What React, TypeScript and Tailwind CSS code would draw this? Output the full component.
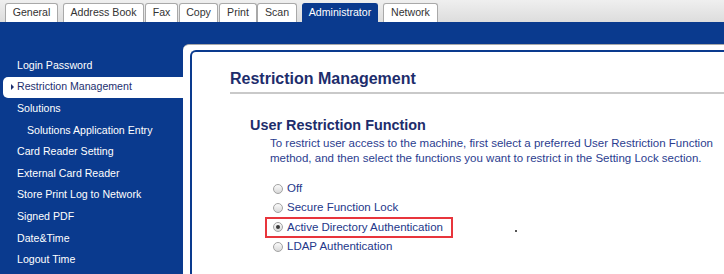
import React from 'react'

const tabs = [
  { label: 'General', w: 'w-[53px]', ml: 'ml-[5px]' },
  { label: 'Address Book', w: 'w-[81px]', ml: 'ml-[5px]' },
  { label: 'Fax', w: 'w-[33px]', ml: 'ml-[1px]' },
  { label: 'Copy', w: 'w-[39px]', ml: 'ml-[1px]' },
  { label: 'Print', w: 'w-[38px]', ml: 'ml-[1px]' },
  { label: 'Scan', w: 'w-[40px]', ml: 'ml-0' },
  { label: 'Administrator', w: 'w-[76px]', ml: 'ml-[5px]', active: true },
  { label: 'Network', w: 'w-[55px]', ml: 'ml-[5px]' },
]

const menu = [
  { label: 'Login Password' },
  { label: 'Restriction Management', selected: true },
  { label: 'Solutions' },
  { label: 'Solutions Application Entry', sub: true },
  { label: 'Card Reader Setting' },
  { label: 'External Card Reader' },
  { label: 'Store Print Log to Network' },
  { label: 'Signed PDF' },
  { label: 'Date&Time' },
  { label: 'Logout Time' },
]

const options = [
  { label: 'Off' },
  { label: 'Secure Function Lock' },
  { label: 'Active Directory Authentication', checked: true },
  { label: 'LDAP Authentication' },
]

const Radio = ({ checked }: { checked?: boolean }) => (
  <span className="flex h-[10px] w-[10px] shrink-0 items-center justify-center rounded-full border border-[#a2a2a2] bg-gradient-to-b from-[#fbfbfb] to-[#d9d9d9]">
    {checked && <span className="h-[4px] w-[4px] rounded-full bg-[#3a3a3a]" />}
  </span>
)

export default function App() {
  return (
    <div className="h-[274px] w-[724px] overflow-hidden bg-white font-['Liberation_Sans',Arial,sans-serif]">
      {/* tab strip */}
      <div className="flex h-[22px] items-end bg-gradient-to-b from-[#efefef] to-[#dddddd]">
        {tabs.map((t) => (
          <div
            key={t.label}
            className={`${t.w} ${t.ml} flex h-[19px] items-center justify-center rounded-t-[3px] border border-b-0 text-[10.6px] ${
              t.active
                ? 'border-[#0a3a8e] bg-[#0a3a8e] text-white'
                : 'border-[#a9a9a9] bg-white text-[#333]'
            }`}
          >
            {t.label}
          </div>
        ))}
      </div>

      <div className="flex h-[252px] bg-[#0a3a8e]">
        {/* side menu */}
        <ul className="w-[183px] shrink-0 pt-[33px] text-[10.6px] text-white">
          {menu.map((m) =>
            m.selected ? (
              <li
                key={m.label}
                className="ml-[3px] flex h-[21.6px] items-center rounded-l-[5px] bg-white text-[#1d2f6f]"
              >
                <span className="ml-[8px] mr-[3px] h-0 w-0 border-y-[3px] border-l-[3px] border-y-transparent border-l-[#1d2f6f]" />
                {m.label}
              </li>
            ) : (
              <li
                key={m.label}
                className={`flex h-[21.6px] items-center ${m.sub ? 'pl-[27px]' : 'pl-[17px]'}`}
              >
                {m.label}
              </li>
            )
          )}
        </ul>

        {/* main area */}
        <div className="mt-[22px] flex-1 rounded-tl-[6px] border-t border-[#a8a8a8] bg-white pl-[7px] pt-[5px]">
          <div className="h-full rounded-tl-[6px] border-l-2 border-t-2 border-[#0a3a8e] pl-[38px] pt-[17px]">
            <h1 className="border-b-2 border-[#c9c9c9] pb-[3px] text-[16px] font-bold leading-[20px] text-[#1d2d6c]">
              Restriction Management
            </h1>

            <h2 className="ml-[20px] mt-[22px] text-[14.4px] font-bold leading-[18px] text-[#1d2d6c]">
              User Restriction Function
            </h2>
            <p className="ml-[40px] mt-[2px] text-[11.5px] leading-[15px] text-[#2b3d8f]">
              To restrict user access to the machine, first select a preferred User Restriction Function
              <br />
              method, and then select the functions you want to restrict in the Setting Lock section.
            </p>

            <div className="ml-[40px] mt-[13px] text-[11.5px] text-[#24378a]">
              {options.map((o) =>
                o.checked ? (
                  <div key={o.label} className="flex h-[19.4px] items-center">
                    <div className="-ml-[5px] flex h-[21px] items-center gap-[4px] border-2 border-[#e8353c] pl-[6px] pr-[8px]">
                      <Radio checked />
                      <span>{o.label}</span>
                    </div>
                    <span className="ml-[62px] mt-[8px] h-[2px] w-[2px] bg-[#555]" />
                  </div>
                ) : (
                  <div key={o.label} className="flex h-[19.4px] items-center gap-[4px] pl-[3px]">
                    <Radio />
                    <span>{o.label}</span>
                  </div>
                )
              )}
            </div>
          </div>
        </div>
      </div>
    </div>
  )
}
